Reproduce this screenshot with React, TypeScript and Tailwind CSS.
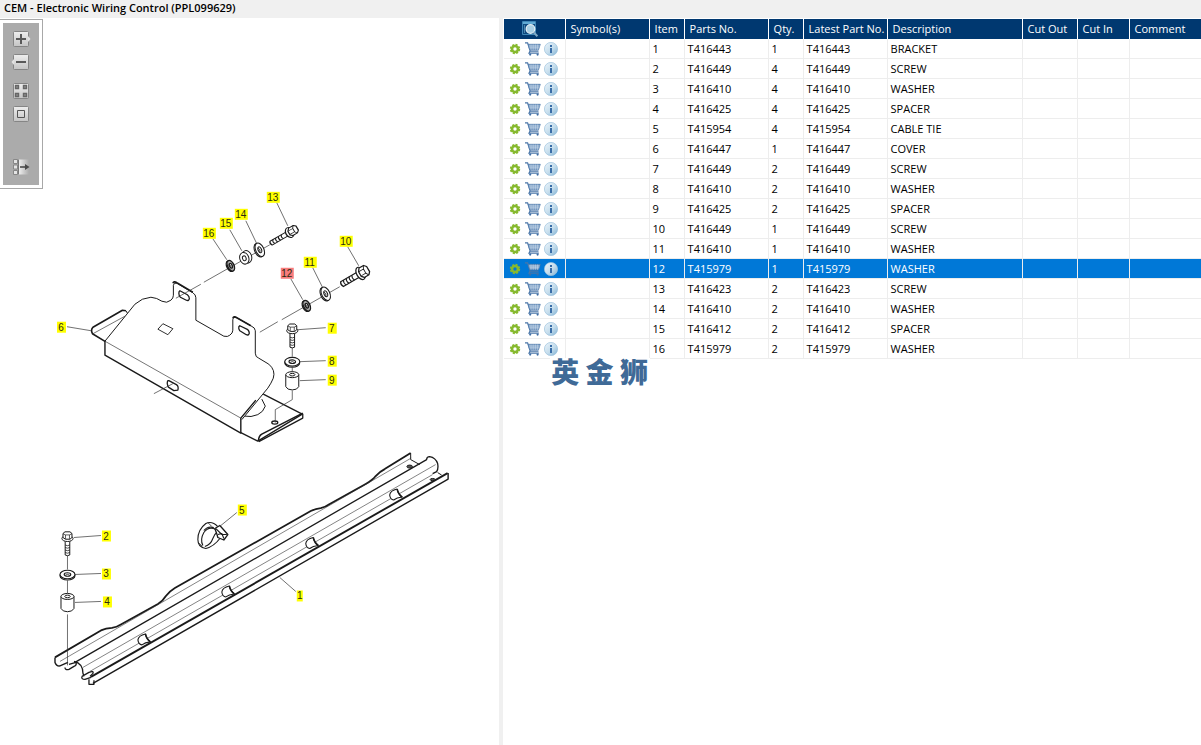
import React from 'react';

interface Part {
  item: number;
  partNo: string;
  qty: number;
  description: string;
}

const parts: Part[] = [
  { item: 1, partNo: 'T416443', qty: 1, description: 'BRACKET' },
  { item: 2, partNo: 'T416449', qty: 4, description: 'SCREW' },
  { item: 3, partNo: 'T416410', qty: 4, description: 'WASHER' },
  { item: 4, partNo: 'T416425', qty: 4, description: 'SPACER' },
  { item: 5, partNo: 'T415954', qty: 4, description: 'CABLE TIE' },
  { item: 6, partNo: 'T416447', qty: 1, description: 'COVER' },
  { item: 7, partNo: 'T416449', qty: 2, description: 'SCREW' },
  { item: 8, partNo: 'T416410', qty: 2, description: 'WASHER' },
  { item: 9, partNo: 'T416425', qty: 2, description: 'SPACER' },
  { item: 10, partNo: 'T416449', qty: 1, description: 'SCREW' },
  { item: 11, partNo: 'T416410', qty: 1, description: 'WASHER' },
  { item: 12, partNo: 'T415979', qty: 1, description: 'WASHER' },
  { item: 13, partNo: 'T416423', qty: 2, description: 'SCREW' },
  { item: 14, partNo: 'T416410', qty: 2, description: 'WASHER' },
  { item: 15, partNo: 'T416412', qty: 2, description: 'SPACER' },
  { item: 16, partNo: 'T415979', qty: 2, description: 'WASHER' },
];

const columns = ['Symbol(s)', 'Item', 'Parts No.', 'Qty.', 'Latest Part No.', 'Description', 'Cut Out', 'Cut In', 'Comment'];

// label centre and its leader line
const callouts = [
  { n: 1, x: 300, y: 596, lead: 'M296 592L280 578' },
  { n: 2, x: 106, y: 536, lead: 'M101 536L74 538' },
  { n: 3, x: 106, y: 574, lead: 'M101 574L75 575' },
  { n: 4, x: 107, y: 602, lead: 'M101 602L75 603' },
  { n: 5, x: 242, y: 510, lead: 'M237 513L221 526' },
  { n: 6, x: 61, y: 327, lead: 'M67 327L91 331' },
  { n: 7, x: 332, y: 328, lead: 'M326 328L298 330' },
  { n: 8, x: 332, y: 361, lead: 'M326 361L300 362' },
  { n: 9, x: 332, y: 380, lead: 'M326 380L300 381' },
  { n: 10, x: 346, y: 241, lead: 'M348 247L359 266' },
  { n: 11, x: 310, y: 262, lead: 'M313 268L323 288' },
  { n: 12, x: 287, y: 273, lead: 'M291 279L303 300' },
  { n: 13, x: 273, y: 197, lead: 'M277 203L288 226' },
  { n: 14, x: 241, y: 214, lead: 'M246 221L257 244' },
  { n: 15, x: 226, y: 223, lead: 'M230 230L242 251' },
  { n: 16, x: 209, y: 233, lead: 'M213 239L227 260' },
];

const GearIcon = () => (
  <svg width="13" height="12" viewBox="0 0 13 12" fill="none">
    <circle cx="6" cy="6" r="4.4" stroke="#86b92e" strokeWidth="1.6" strokeDasharray="2.1 1.356" />
    <circle cx="6" cy="6" r="3" stroke="#86b92e" strokeWidth="2.6" />
  </svg>
);

const CartIcon = () => (
  <svg width="16" height="14" viewBox="0 0 16 14" fill="none">
    <path d="M0 .8h2.6l2.6 8.4h8.3M5 9.3l-1 1.9h9.800" stroke="#4a76a8" strokeWidth="1.200" />
    <path d="M3.200 2.300h12.100l-1.800 5.500H4.800z" fill="#7d9fc6" stroke="#4a76a8" strokeWidth=".7" />
    <path d="M3.800 4h11M4.400 5.800h10M6 2.500v5.300M8.200 2.500v5.300M10.400 2.500v5.300M12.600 2.500v5.300" stroke="#c8d9ea" strokeWidth=".6" />
    <circle cx="5.200" cy="12.600" r="1.100" fill="#3f6ea5" />
    <circle cx="12.600" cy="12.600" r="1.100" fill="#3f6ea5" />
  </svg>
);

const InfoIcon = () => (
  <svg width="14" height="14" viewBox="0 0 14 14">
    <defs>
      <linearGradient id="info" x1="0" y1="0" x2="1" y2="1">
        <stop offset="0" stopColor="#eef5fa" />
        <stop offset=".55" stopColor="#c3dcec" />
        <stop offset="1" stopColor="#7fb0d2" />
      </linearGradient>
    </defs>
    <circle cx="7" cy="7" r="6.600" fill="url(#info)" stroke="#9cc1dc" strokeWidth=".7" />
    <path d="M6 3h2v2H6zM6 6h2v5H6z" fill="#3a6ea8" />
  </svg>
);

const SearchHeaderIcon = () => (
  <svg width="17" height="16" viewBox="0 0 17 16" fill="none">
    <path d="M.5.5h13v13H.5z" fill="#0e4a80" stroke="#3f87b8" />
    <path d="M1 1h12v2H1z" fill="#5fa9d4" />
    <path d="M2.500 4.500v8" stroke="#8cc3e2" strokeDasharray="1 1" />
    <circle cx="8.500" cy="8" r="4.300" fill="#a9cfe4" stroke="#e2eef5" strokeWidth="1.300" />
    <path d="M11.800 11.500l3.600 3.800" stroke="#7fa9c6" strokeWidth="2" />
  </svg>
);

interface ToolButtonProps {
  label: string;
  className: string;
  children: React.ReactNode;
}

const ToolButton = ({ label, className, children }: ToolButtonProps) => (
  <button type="button" aria-label={label} className={className}>
    <svg width="20" height="16" viewBox="0 0 20 16" fill="none">
      {children}
    </svg>
  </button>
);

const Face = () => <rect x="2.500" y=".5" width="15" height="15" rx="1" fill="url(#face)" stroke="#858585" />;

const Toolbar = () => (
  <div className="mt-px h-[170px] shrink-0 border border-l-0 border-[#a8a8a8] p-[3px]">
    <div className="flex h-full w-9 flex-col items-center bg-[#ababab] pt-2">
      <svg width="0" height="0" className="absolute">
        <linearGradient id="face" x1="0" y1="0" x2="0" y2="1">
          <stop offset="0" stopColor="#eeeeee" />
          <stop offset="1" stopColor="#c4c4c4" />
        </linearGradient>
        <linearGradient id="fade" x1="0" y1="0" x2="1" y2="0">
          <stop offset="0" stopColor="#f4f4f4" />
          <stop offset="1" stopColor="#ababab" />
        </linearGradient>
      </svg>
      <ToolButton label="Zoom in" className="block">
        <Face />
        <path d="M17 5l2.500 3-2.500 3z" fill="#e2e2e2" />
        <path d="M10 3v10M5 8h10" stroke="#595959" strokeWidth="2" />
      </ToolButton>
      <ToolButton label="Zoom out" className="mt-[7px] block">
        <Face />
        <path d="M3 5L.5 8 3 11z" fill="#e2e2e2" />
        <path d="M5 8h10" stroke="#595959" strokeWidth="2" />
      </ToolButton>
      <ToolButton label="Fit page" className="mt-[13px] block">
        <Face />
        <path
          d="M4.500 2.500h3v3h-3zM12.500 2.500h3v3h-3zM4.500 10.500h3v3h-3zM12.500 10.500h3v3h-3z"
          fill="#909090"
          stroke="#666666"
          strokeWidth="1.400"
        />
      </ToolButton>
      <ToolButton label="Actual size" className="mt-[7px] block">
        <Face />
        <path d="M6.500 4.500h7v7h-7z" stroke="#555555" />
      </ToolButton>
      <ToolButton label="Toggle list" className="mt-[37px] block">
        <path d="M7 .5h11v15H7z" fill="url(#fade)" />
        <path d="M2.500.5h4v4h-4zM2.500 6h4v4h-4zM2.500 11.500h4v4h-4z" fill="#e4e4e4" stroke="#808080" strokeWidth=".9" />
        <path d="M7.500.5v15" stroke="#777777" />
        <path d="M9 8h7" stroke="#4a4a4a" strokeWidth="1.600" />
        <path d="M14 5l4.500 3-4.500 3z" fill="#4a4a4a" />
      </ToolButton>
    </div>
  </div>
);

// upright hex screw, drawn with its flange centred on 0,0
const Screw = ({ transform }: { transform: string }) => (
  <g transform={transform}>
    <path d="M-2.300 3v14.500q2.300 1.400 4.600 0V3" fill="#fff" />
    <path d="M-2.300 7.500q2.300 1.400 4.600 0M-2.300 10q2.300 1.400 4.600 0M-2.300 12.500q2.300 1.400 4.600 0M-2.300 15q2.300 1.400 4.600 0" strokeWidth=".8" />
    <ellipse cx="0" cy="1" rx="5.600" ry="3" fill="#fff" />
    <path d="M-4.500 0v-4l2-1.700h5l2 1.700v4l-2 1.700h-4.500z" fill="#fff" />
    <path d="M-4.500-3.800l2.500 1.200h4l2.500-1.200M-2-2.600v4M2-2.600v4" strokeWidth=".7" />
  </g>
);

const Washer = ({ transform, dark }: { transform: string; dark?: boolean }) => (
  <g transform={transform} strokeWidth={dark ? 1.8 : 1.1}>
    <ellipse cx="0" cy="1.200" rx="7.500" ry="4.300" fill="#fff" />
    <ellipse cx="0" cy="0" rx="7.500" ry="4.300" fill={dark ? '#aaa' : '#fff'} />
    <ellipse cx="0" cy="0" rx="3.300" ry="1.800" fill="#fff" />
    <path d="M-2.500 1q2.500-2.200 5 0" strokeWidth=".8" />
  </g>
);

const Spacer = ({ transform }: { transform: string }) => (
  <g transform={transform}>
    <path d="M-6.500-6v12q1.500 3.300 6.500 3.300t6.500-3.300v-12" fill="#fff" />
    <ellipse cx="0" cy="-6" rx="6.500" ry="3" fill="#fff" />
    <ellipse cx="0" cy="-6" rx="2.700" ry="1.300" />
  </g>
);

const Cover = () => (
  <g>
    <path d="M126 311l-3.500-.5-29.500 17q-2.500 2.500-.5 6.500l13 8" strokeWidth="1.600" />
    <path d="M93 334l32-17.500" strokeWidth=".6" />
    <path d="M126 311l1.500 2.500" />
    <path d="M263.500 394.500l39 20-44.500 27-17-8.500" fill="#fff" strokeWidth="1.300" />
    <path d="M303 414v4.500l-44 23.500" strokeWidth="1.300" />
    <path d="M303 413.500l-41 21q-3 1.500-3.500 7" strokeWidth="1.600" />
    <path d="M262 399.500l3.500 7q-2 6-7.500 8.500-7 3-13 1.500" />
    <path d="M105 341.500l30-37q7-6.500 16-7 6 .5 11 4 5 2.500 9-1 2.500-2 2.500-5v-10q.5-3 3.500-2l16 9.500q3 2 3 5v22.500l28 16q4 1 6-1 3-2 3-5v-10.500q.500-3.500 4-2l14 8q4.500 2 4.500 5v22.500q0 4 3.500 5l10 6q7 6 4.500 14-2 5-5.500 10l-26 31.500" fill="#fff" />
    <path d="M105 341.500l136 77" strokeWidth=".6" />
    <path d="M105 341.500v14l136 78v-15l15-18" strokeWidth="1.400" />
    <path d="M173 283.500q1-2.500 4-.5l16 9.500M233 318.500q1-2.500 4-.5l14 8" strokeWidth="1.600" />
    <path d="M180 291l7.500 4q2 1.500 2 4-.5 2.500-3 1.500l-6-3q-1.500-1-1.500-4 0-2 1-2.500zM240 326l8 4q1.500 1.500 1.500 3.500-.5 2.500-3 1.500l-6.500-4q-1.500-1.500-1-4zM169 381l7.500 4q2.500 1.500 1.500 5.500l-4 .5-5.500-3.500q-2-4-.5-6.500z" strokeWidth="1.300" />
    <path d="M163 324l10 5-5 6-10-5.500z" strokeWidth=".9" />
    <ellipse cx="275" cy="423" rx="3" ry="1.600" strokeWidth="1.300" />
  </g>
);

const Bracket = () => (
  <g>
    <path d="M55 658l46-27q5-2.200 11-2.500 5-1 8-3l38-21q5-3 8-8 4-5 9-8l136-77q5-2.500 10-3 5-1 9-4l36-20q7-4 10-8 4-4.500 9-7l26-16" strokeWidth="1.800" />
    <path d="M411 453.500v6.500l9 5" />
    <path d="M55 658v5q1.500 4 5 3.500l8-3.500" strokeWidth="1.400" />
    <path d="M60 662l351.500-203.500M83 668l353-203M90 672l343-197" strokeWidth=".6" stroke="#333" />
    <path d="M75 663l352-203q0-3 3-3 6 1 8 7 1 5-1 8l-4 2" strokeWidth="1.300" />
    <path d="M91 677.500l357-204" strokeWidth="1.900" />
    <path d="M448.500 473.500v6L93 684" strokeWidth="1.400" />
    <path d="M438 473l4 2.500" />
    <path d="M65 668q0 3 4 2l5-3q3-1 2-4l-7 2M74 662q9 2 9 12l1 3M82 677l7-4q5-2 4 1l-3 3M82 677q-1 3 3 3l6-2M89 680v5h5v-4" strokeWidth="1.300" />
    <ellipse cx="410" cy="467" rx="2.800" ry="1.500" fill="#555" />
    <ellipse cx="433" cy="480" rx="2.500" ry="1.100" fill="#555" />
    {['translate(144 640)', 'translate(228 592)', 'translate(312 543.500)', 'translate(396 495)'].map((t) => (
      <g key={t} transform={t}>
        <path d="M1.500-5.500q-7 1.500-7.500 6 .5 4.500 4 5 3-2.500 8.500-3-4-3-5-8z" fill="#fff" strokeWidth="1.100" />
        <path d="M1.500-5.500q1 5 5 8" strokeWidth="1.600" />
      </g>
    ))}
  </g>
);

const CableTie = () => (
  <g strokeWidth="1.100">
    <path d="M218 527q-6-6-12-3-8 6-8 16 0 8 8 9 8-2 14-10" />
    <path d="M216 530q-7-4-12 3-4 7-1 13M214 528q-6-2-10 3M205 547q6-2 8-8 2-5 5-7" />
    <path d="M198.500 543l4 4M208 523l4 4" strokeWidth=".8" />
    <path d="M215 529l5-3 8 9-4 5.500-6-2.500-1-3.500z" fill="#fff" strokeWidth="1.300" />
    <path d="M216 529l6 6 5 0M218 535l4-1 2 5" />
  </g>
);

const Drawing = () => (
  <svg
    viewBox="43 18 456 727"
    role="img"
    aria-label="Exploded parts drawing"
    className="min-w-0 flex-1 self-start"
    fill="none"
    stroke="#1a1a1a"
    strokeLinejoin="round"
  >
    <Bracket />
    <Cover />
    <CableTie />
    <g strokeWidth=".7" stroke="#333">
      <path d="M67.500 556v14M67.500 581v13M67.500 615v51" />
      <path d="M292.500 348v9M292.500 368v6M292.500 391v9l-17 10v13" />
      <path d="M270 245l-66 37.500M201 284.500l-25 14M340 287l-58 33M278 322l-18 10.500M154 394l19-10" />
    </g>
    <Screw transform="translate(67.500 538)" />
    <Washer transform="translate(67.500 575)" />
    <Spacer transform="translate(67.500 603)" />
    <Screw transform="translate(292.500 330)" />
    <Washer transform="translate(292.500 362)" />
    <Spacer transform="translate(292.500 381)" />
    <Screw transform="translate(291 232) rotate(60) scale(.95 1.300)" />
    <Screw transform="translate(362 273) rotate(60) scale(1.200 1.300)" />
    <Washer transform="translate(260 250) rotate(65) scale(.95)" />
    <Washer transform="translate(326 294) rotate(65) scale(.95)" />
    <Washer transform="translate(231 266) rotate(65) scale(.75)" dark />
    <Washer transform="translate(307 306) rotate(65) scale(.75)" dark />
    <g>
      <ellipse cx="247" cy="257" rx="4.800" ry="6.300" transform="rotate(-20 247 257)" fill="#fff" />
      <ellipse cx="244.500" cy="258.500" rx="4.500" ry="6" transform="rotate(-20 244.500 258.500)" fill="#fff" />
      <ellipse cx="244.500" cy="258.500" rx="1.800" ry="2.500" transform="rotate(-20 244.500 258.500)" />
    </g>
    {callouts.map(({ n, x, y, lead }) => (
      <g key={n}>
        <path d={lead} stroke="#333" strokeWidth=".7" />
        <rect
          x={n > 9 ? x - 6 : n === 1 ? x - 3 : x - 4}
          y={y - 5}
          width={n > 9 ? 13 : n === 1 ? 6 : 9}
          height="11"
          fill={n === 12 ? '#f87c7c' : '#ffff00'}
          stroke="none"
        />
        <text
          x={x}
          y={y + 4}
          textAnchor="middle"
          fontSize="10"
          fill="#2b2b10"
          stroke="none"
          className="font-['Liberation_Sans',sans-serif]"
        >
          {n}
        </text>
      </g>
    ))}
  </svg>
);

const PartsTable = () => (
  <table className="w-full table-fixed border-separate border-spacing-0 text-left text-[11px] leading-[14px]">
    <colgroup>
      <col className="w-[62px]" />
      <col className="w-[84px]" />
      <col className="w-[35px]" />
      <col className="w-[84px]" />
      <col className="w-[35px]" />
      <col className="w-[84px]" />
      <col className="w-[135px]" />
      <col className="w-[55px]" />
      <col className="w-[52px]" />
      <col />
    </colgroup>
    <thead>
      <tr className="h-5 bg-[#003870] text-white">
        <th aria-label="Actions" className="border-r border-white p-0 pl-[18px]">
          <SearchHeaderIcon />
        </th>
        {columns.map((name) => (
          <th key={name} className="border-r border-white p-0 pl-[5px] font-normal whitespace-nowrap last:border-r-0">
            {name}
          </th>
        ))}
      </tr>
    </thead>
    <tbody>
      {parts.map((part) => (
        <tr
          key={part.item}
          className={
            part.item === 12
              ? 'h-5 bg-[#0078d7] text-white *:border-r *:border-b *:border-[#ededed] *:p-0 *:pl-[3px] *:last:border-r-0'
              : 'h-5 text-black *:border-r *:border-b *:border-[#ededed] *:p-0 *:pl-[3px] *:last:border-r-0'
          }
        >
          <td>
            <div className="flex items-center gap-[3px] pl-[2px]">
              <button type="button" aria-label="Configure"><GearIcon /></button>
              <button type="button" aria-label="Add to cart"><CartIcon /></button>
              <button type="button" aria-label="Information"><InfoIcon /></button>
            </div>
          </td>
          <td />
          <td>{part.item}</td>
          <td>{part.partNo}</td>
          <td>{part.qty}</td>
          <td>{part.partNo}</td>
          <td>{part.description}</td>
          <td />
          <td />
          <td />
        </tr>
      ))}
    </tbody>
  </table>
);

export default function App() {
  return (
    <div className="flex min-h-screen flex-col bg-[#f0f0f0] font-['Open_Sans','Noto_Sans',sans-serif]">
      <h1 className="h-[18px] px-1 text-[11px] leading-4 font-semibold text-black">
        CEM - Electronic Wiring Control (PPL099629)
      </h1>
      <main className="flex flex-1 gap-1">
        <section className="flex min-w-0 flex-[499] items-start bg-white">
          <Toolbar />
          <Drawing />
        </section>
        <section className="min-w-0 flex-[698] bg-white pt-px pl-px">
          <PartsTable />
          <p className="-mt-px ml-[46px] w-[100px] bg-white text-center font-['Noto_Sans_CJK_SC',sans-serif] text-[28px] leading-[26px] font-black whitespace-nowrap text-[#3f6a97]">
            英 金 狮
          </p>
        </section>
      </main>
    </div>
  );
}
